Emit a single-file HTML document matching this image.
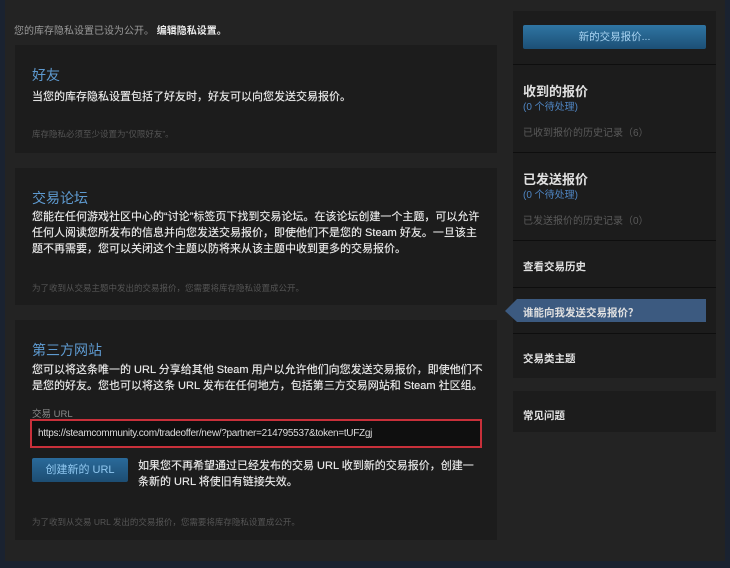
<!DOCTYPE html>
<html><head><meta charset="utf-8"><style>
*{margin:0;padding:0;box-sizing:border-box}
body{width:730px;height:568px;background:#1a2230;font-family:"Liberation Sans","Noto Sans CJK SC",sans-serif;position:relative;overflow:hidden}
.page{position:absolute;left:5px;top:0;width:720px;height:561px;background:#232323}
.a{position:absolute}
.panel{position:absolute;left:15px;width:482px;background:#1c1c1c}
h3{position:absolute;left:17px;font-weight:normal;color:#5e9ad0;font-size:14px}
.t{position:absolute;left:17px;color:#e4e4e4;font-size:11px;line-height:16px;font-weight:normal;text-shadow:0 0 0.4px #fff}
.n{position:absolute;left:17px;color:#555;font-size:8.5px}
.side{position:absolute;left:513px;width:203px;background:#1c1c1c}
.div{position:absolute;left:513px;width:203px;height:1px;background:#0e0e0e}
.s{position:absolute;left:523px;color:#e0e0e0;font-size:10.5px;font-weight:bold}
</style></head><body>
<div class="page"></div>
<div class="a" style="left:14px;top:22px;font-size:10px;color:#9a9a9a">您的库存隐私设置已设为公开。 <b style="color:#e8e8e8">编辑隐私设置。</b></div>

<div class="panel" style="top:45px;height:108px">
<h3 style="top:20px">好友</h3>
<div class="t" style="top:44px">当您的库存隐私设置包括了好友时，好友可以向您发送交易报价。</div>
<div class="n" style="top:83px">库存隐私必须至少设置为“仅限好友”。</div>
</div>

<div class="panel" style="top:168px;height:137px">
<h3 style="top:20px">交易论坛</h3>
<div class="t" style="top:41px;width:455px">您能在任何游戏社区中心的“讨论”标签页下找到交易论坛。在该论坛创建一个主题，可以允许任何人阅读您所发布的信息并向您发送交易报价，即使他们不是您的 Steam 好友。一旦该主题不再需要，您可以关闭这个主题以防将来从该主题中收到更多的交易报价。</div>
<div class="n" style="top:114px">为了收到从交易主题中发出的交易报价，您需要将库存隐私设置成公开。</div>
</div>

<div class="panel" style="top:320px;height:220px">
<h3 style="top:20px">第三方网站</h3>
<div class="t" style="top:42px;width:460px">您可以将这条唯一的 URL 分享给其他 Steam 用户以允许他们向您发送交易报价，即使他们不是您的好友。您也可以将这条 URL 发布在任何地方，包括第三方交易网站和 Steam 社区组。</div>
<div class="a" style="left:17px;top:86px;font-size:9.5px;color:#888">交易 URL</div>
<div class="a" style="left:15px;top:99px;width:452px;height:29px;border:2px solid #c8303a;background:#0f0f0f;color:#ddd;font-size:10px;padding:7px 0 0 6px;letter-spacing:-0.3px">https://steamcommunity.com/tradeoffer/new/?partner=214795537&amp;token=tUFZgj</div>
<div class="a" style="left:17px;top:138px;width:96px;height:24px;background:linear-gradient(#2a6a9a,#1d4d72);border-radius:2px;color:#8fc7f0;font-size:11px;text-align:center;line-height:24px">创建新的 URL</div>
<div class="t" style="left:123px;top:138px;width:345px">如果您不再希望通过已经发布的交易 URL 收到新的交易报价，创建一条新的 URL 将使旧有链接失效。</div>
<div class="n" style="top:196px">为了收到从交易 URL 发出的交易报价，您需要将库存隐私设置成公开。</div>
</div>

<div class="side" style="top:11px;height:367px"></div>
<div class="side" style="top:391px;height:41px"></div>
<div class="a" style="left:523px;top:25px;width:183px;height:24px;background:linear-gradient(#2f75a3,#1c4f75);border-radius:2px;color:#a9d4f2;font-size:10.5px;text-align:center;line-height:24px">新的交易报价...</div>
<div class="div" style="top:64px"></div>
<div class="s" style="top:81px;font-size:13px">收到的报价</div>
<div class="a" style="left:523px;top:98px;font-size:10px;color:#4f85c2">(0 个待处理)</div>
<div class="a" style="left:523px;top:124px;font-size:10px;color:#5a5a5a">已收到报价的历史记录（6）</div>
<div class="div" style="top:152px"></div>
<div class="s" style="top:169px;font-size:13px">已发送报价</div>
<div class="a" style="left:523px;top:186px;font-size:10px;color:#4f85c2">(0 个待处理)</div>
<div class="a" style="left:523px;top:212px;font-size:10px;color:#5a5a5a">已发送报价的历史记录（0）</div>
<div class="div" style="top:240px"></div>
<div class="s" style="top:259px">查看交易历史</div>
<div class="div" style="top:287px"></div>
<svg class="a" style="left:505px;top:299px" width="202" height="24"><polygon points="0,12 12,0 201,0 201,23 12,23" fill="#3c5a80"/></svg>
<div class="s" style="top:305px">谁能向我发送交易报价？</div>
<div class="div" style="top:333px"></div>
<div class="s" style="top:351px">交易类主题</div>
<div class="s" style="top:408px">常见问题</div>
</body></html>
